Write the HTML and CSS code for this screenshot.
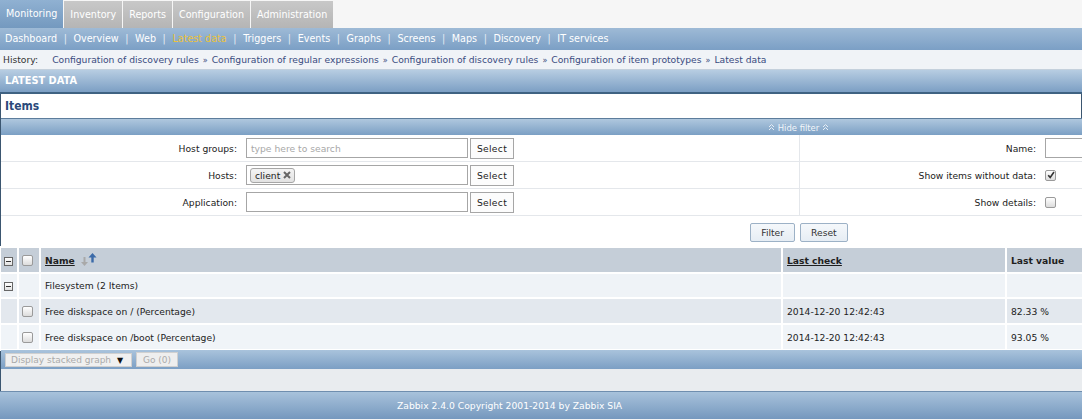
FILE: index.html
```html
<!DOCTYPE html>
<html>
<head>
<meta charset="utf-8">
<title>Latest data</title>
<link rel="stylesheet" href="styles.css">
</head>
<body>
<div class="page">
  <div class="tabs">
    <span class="tab active">Monitoring</span><span class="tab">Inventory</span><span class="tab">Reports</span><span class="tab">Configuration</span><span class="tab">Administration</span>
  </div>
  <div class="submenu">
    <span>Dashboard</span><span class="sep">|</span><span>Overview</span><span class="sep">|</span><span>Web</span><span class="sep">|</span><span class="cur">Latest data</span><span class="sep">|</span><span>Triggers</span><span class="sep">|</span><span>Events</span><span class="sep">|</span><span>Graphs</span><span class="sep">|</span><span>Screens</span><span class="sep">|</span><span>Maps</span><span class="sep">|</span><span>Discovery</span><span class="sep">|</span><span>IT services</span>
  </div>
  <div class="history">
    <span class="hlabel">History:</span><span>Configuration of discovery rules</span><span class="hsep">»</span><span>Configuration of regular expressions</span><span class="hsep">»</span><span>Configuration of discovery rules</span><span class="hsep">»</span><span>Configuration of item prototypes</span><span class="hsep">»</span><span>Latest data</span>
  </div>
  <div class="pagehead">LATEST DATA</div>
  <div class="content">
    <div class="items-head">Items</div>
    <div class="filter-toggle">
      <svg width="7" height="8" viewBox="0 0 7 8"><path d="M1 4L3.5 1.5L6 4M1 7L3.5 4.5L6 7" fill="none" stroke="#e6edf5" stroke-width="1"/></svg>
      <span>Hide filter</span>
      <svg width="7" height="8" viewBox="0 0 7 8"><path d="M1 4L3.5 1.5L6 4M1 7L3.5 4.5L6 7" fill="none" stroke="#e6edf5" stroke-width="1"/></svg>
    </div>
    <div class="filter">
      <div class="fcol">
        <div class="frow"><label>Host groups:</label><div class="ms"><span class="ph">type here to search</span></div><button class="sel">Select</button></div>
        <div class="frow"><label>Hosts:</label><div class="ms"><span class="tag">client <svg width="8" height="8" viewBox="0 0 8 8"><path d="M1 1L7 7M7 1L1 7" stroke="#666" stroke-width="2"/></svg></span></div><button class="sel">Select</button></div>
        <div class="frow"><label>Application:</label><div class="ms"></div><button class="sel">Select</button></div>
      </div>
      <div class="fcol right">
        <div class="frow"><label>Name:</label><div class="txt"></div></div>
        <div class="frow"><label>Show items without data:</label><span class="cb checked"><svg width="8" height="8" viewBox="0 0 8 8"><path d="M1.2 4.2L3.2 6.4L7 1" fill="none" stroke="#333" stroke-width="1.6"/></svg></span></div>
        <div class="frow"><label>Show details:</label><span class="cb"></span></div>
      </div>
    </div>
    <div class="filter-buttons"><button class="fbtn">Filter</button><button class="fbtn">Reset</button></div>
    <table class="list">
      <colgroup><col class="w-tog"><col class="w-chk"><col class="w-name"><col class="w-check"><col class="w-val"><col class="w-rest"></colgroup>
      <thead>
        <tr><th><i class="tog"></i></th><th><span class="cb"></span></th><th><u>Name</u> <svg class="sort" width="18" height="14" viewBox="0 0 18 14"><path d="M3.5 4h2v5h2.5l-3.5 4l-3.5-4h2.5z" fill="#a9a9a9"/><path d="M12.5 0l4 4.5h-2.8v5h-2.4v-5h-2.8z" fill="#3b6aa8"/></svg></th><th><u>Last check</u></th><th>Last value</th><th></th></tr>
      </thead>
      <tbody>
        <tr class="group"><td><i class="tog"></i></td><td></td><td>Filesystem (2 Items)</td><td></td><td></td><td></td></tr>
        <tr class="odd"><td></td><td><span class="cb"></span></td><td>Free diskspace on / (Percentage)</td><td>2014-12-20 12:42:43</td><td>82.33 %</td><td></td></tr>
        <tr class="even"><td></td><td><span class="cb"></span></td><td>Free diskspace on /boot (Percentage)</td><td>2014-12-20 12:42:43</td><td>93.05 %</td><td></td></tr>
      </tbody>
    </table>
    <div class="actions">
      <span class="dd">Display stacked graph <b>▼</b></span><button class="go" disabled>Go (0)</button>
    </div>
    <div class="spacer"></div>
  </div>
  <div class="footer"><span>Zabbix 2.4.0 Copyright 2001-2014 by Zabbix SIA</span></div>
</div>
</body>
</html>
```
FILE: styles.css
```css
* { box-sizing: border-box; margin: 0; padding: 0; }
html, body { overflow: hidden; }
body {
  width: 1596px;
  font-family: "DejaVu Sans", sans-serif;
  font-size: 9.2px;
  color: #222;
  background: #f4f4f4;
}
.tabs { display: flex; height: 28px; background: #f6f6f6; }
.tab {
  padding: 0 6px;
  margin-right: 1px;
  line-height: 27px;
  height: 28px;
  font-size: 9.6px;
  color: #fff;
  border-top: 1px solid #f6f6f6;
  background: linear-gradient(#c8c8c8, #b5b5b5);
}
.tab.active { background: linear-gradient(#90b1d2, #7499bf); border-top: 0; line-height: 28px; }
.submenu {
  height: 22px;
  line-height: 22px;
  padding-left: 5px;
  font-size: 9.6px;
  color: #fff;
  background: linear-gradient(#9ebad6, #7b9fc5);
}
.submenu .sep { margin: 0 6.6px; color: #e4ebf3; }
.submenu .cur { color: #ecc23a; }
.history {
  height: 20px;
  line-height: 20px;
  padding-left: 3px;
  color: #3a4b80;
  background: #f0f3f7;
  border-bottom: 1px solid #c4d0dc;
}
.history .hlabel { color: #333; margin-right: 14px; }
.history .hsep { margin: 0 4px; font-size: 8px; }
.pagehead {
  height: 24px;
  line-height: 21px;
  padding-left: 5px;
  font-weight: bold;
  font-size: 9.8px;
  color: #fff;
  background: linear-gradient(#b7cde2, #7c9fc4);
  border-bottom: 2px solid #3f6282;
}
.content { border-left: 1px solid #3b5670; background: #e9ecef; }
.items-head {
  width: 1081px;
  height: 24px;
  line-height: 24px;
  padding-left: 4px;
  background: #fff;
  border-right: 1px solid #3b5670;
  font-family: "DejaVu Sans Condensed", "DejaVu Sans", sans-serif;
  font-weight: bold;
  font-size: 12px;
  color: #2b4a7a;
}
.filter-toggle {
  height: 17px;
  display: flex;
  align-items: center;
  justify-content: center;
  gap: 3px;
  font-family: "DejaVu Sans Condensed", "DejaVu Sans", sans-serif;
  font-size: 9.4px;
  color: #f2f6fa;
  background: linear-gradient(#afc7de, #7b9fc4);
  border-top: 1px solid #5d7d9c;
}
.filter { display: flex; background: #fff; }
.fcol { width: 798px; }
.fcol.right { border-left: 1px solid #e4e7eb; width: 797px; }
.frow {
  height: 27px;
  display: flex;
  align-items: center;
  border-bottom: 1px solid #e4e7eb;
}
.frow label { width: 236px; text-align: right; margin-right: 9px; color: #222; }
.ms {
  width: 222px;
  height: 20px;
  border: 1px solid #a6a6a6;
  background: #fff;
  display: flex;
  align-items: center;
  padding-left: 3px;
}
.ph { color: #a8a8a8; padding-left: 1px; }
.tag {
  display: inline-flex;
  align-items: center;
  gap: 3px;
  height: 15px;
  padding: 0 3px 0 4px;
  border: 1px solid #a6a6a6;
  border-radius: 3px;
  background: linear-gradient(#f4f4f4, #e2e2e2);
  color: #222;
}
.sel {
  width: 44px;
  height: 21px;
  margin-left: 2px;
  border: 1px solid #a6a6a6;
  background: #fcfcfc;
  font-family: inherit;
  font-size: 9.2px;
  letter-spacing: 0.3px;
  color: #222;
}
.txt { width: 222px; height: 20px; border: 1px solid #a6a6a6; background: #fff; }
.cb {
  display: inline-flex;
  align-items: center;
  justify-content: center;
  width: 11px;
  height: 11px;
  border: 1px solid #9a9a9a;
  border-radius: 2px;
  background: linear-gradient(#ffffff, #dcdcdc);
  vertical-align: middle;
}
.filter-buttons {
  height: 30px;
  display: flex;
  justify-content: center;
  align-items: center;
  gap: 5px;
  padding-top: 2px;
  padding-left: 1px;
  background: #fff;
}
.fbtn {
  height: 19px;
  padding: 0 10px;
  border: 1px solid #9cb1c6;
  border-radius: 2px;
  background: linear-gradient(#f5f8fb, #e6edf4);
  font-family: inherit;
  font-size: 9.2px;
  color: #333;
}
.list {
  table-layout: fixed;
  width: 1598px;
  margin-left: -2px;
  border-collapse: separate;
  border-spacing: 2px;
  background: #fff;
}
.w-tog { width: 16px; }
.w-chk { width: 20px; }
.w-name { width: 740px; }
.w-check { width: 222px; }
.w-val { width: 200px; }
.list th, .list td {
  height: 24px;
  padding: 0 4px;
  text-align: left;
  white-space: nowrap;
  overflow: hidden;
  vertical-align: middle;
}
.list th { background: #c5ced8; font-weight: bold; color: #1f1f1f; }
.list th u { text-decoration: underline; }
.list th:first-child, .list td:first-child { padding: 0 0 0 3px; }
.list th:nth-child(2), .list td:nth-child(2) { padding: 0 0 0 3px; }
.sort { vertical-align: -3px; margin-left: 2px; }
.list .group td { background: #eff3f7; height: 23px; }
.list .odd td { background: #e3e8ee; }
.list .even td { background: #f0f4f8; }
.tog {
  display: inline-block;
  width: 9px;
  height: 9px;
  border: 1px solid #666;
  background: linear-gradient(#fff, #e2e2e2);
  position: relative;
  vertical-align: middle;
}
.tog::after {
  content: "";
  position: absolute;
  left: 1px;
  right: 1px;
  top: 3px;
  height: 1px;
  background: #333;
}
.actions {
  height: 19px;
  display: flex;
  align-items: center;
  gap: 4px;
  padding-left: 4px;
  margin-top: -1px;
  background: linear-gradient(#a9c3dc, #7c9fc4);
}
.dd {
  width: 127px;
  height: 14px;
  line-height: 13px;
  padding-left: 5px;
  background: #f0f0f0;
  border: 1px solid #d0d0d0;
  color: #aaa;
  font-size: 9px;
}
.dd b { color: #111; font-size: 8px; margin-left: 3px; }
.go {
  width: 42px;
  height: 15px;
  border: 1px solid #d0d0d0;
  background: #eeeeee;
  color: #aaa;
  font-family: inherit;
  font-size: 9px;
}
.spacer { height: 22px; background: #e9ecef; }
.footer {
  height: 28px;
  line-height: 27px;
  padding-left: 397px;
  color: #fff;
  background: linear-gradient(#a8c2db, #7598be);
  border-top: 1px solid #6f8eae;
}
```
